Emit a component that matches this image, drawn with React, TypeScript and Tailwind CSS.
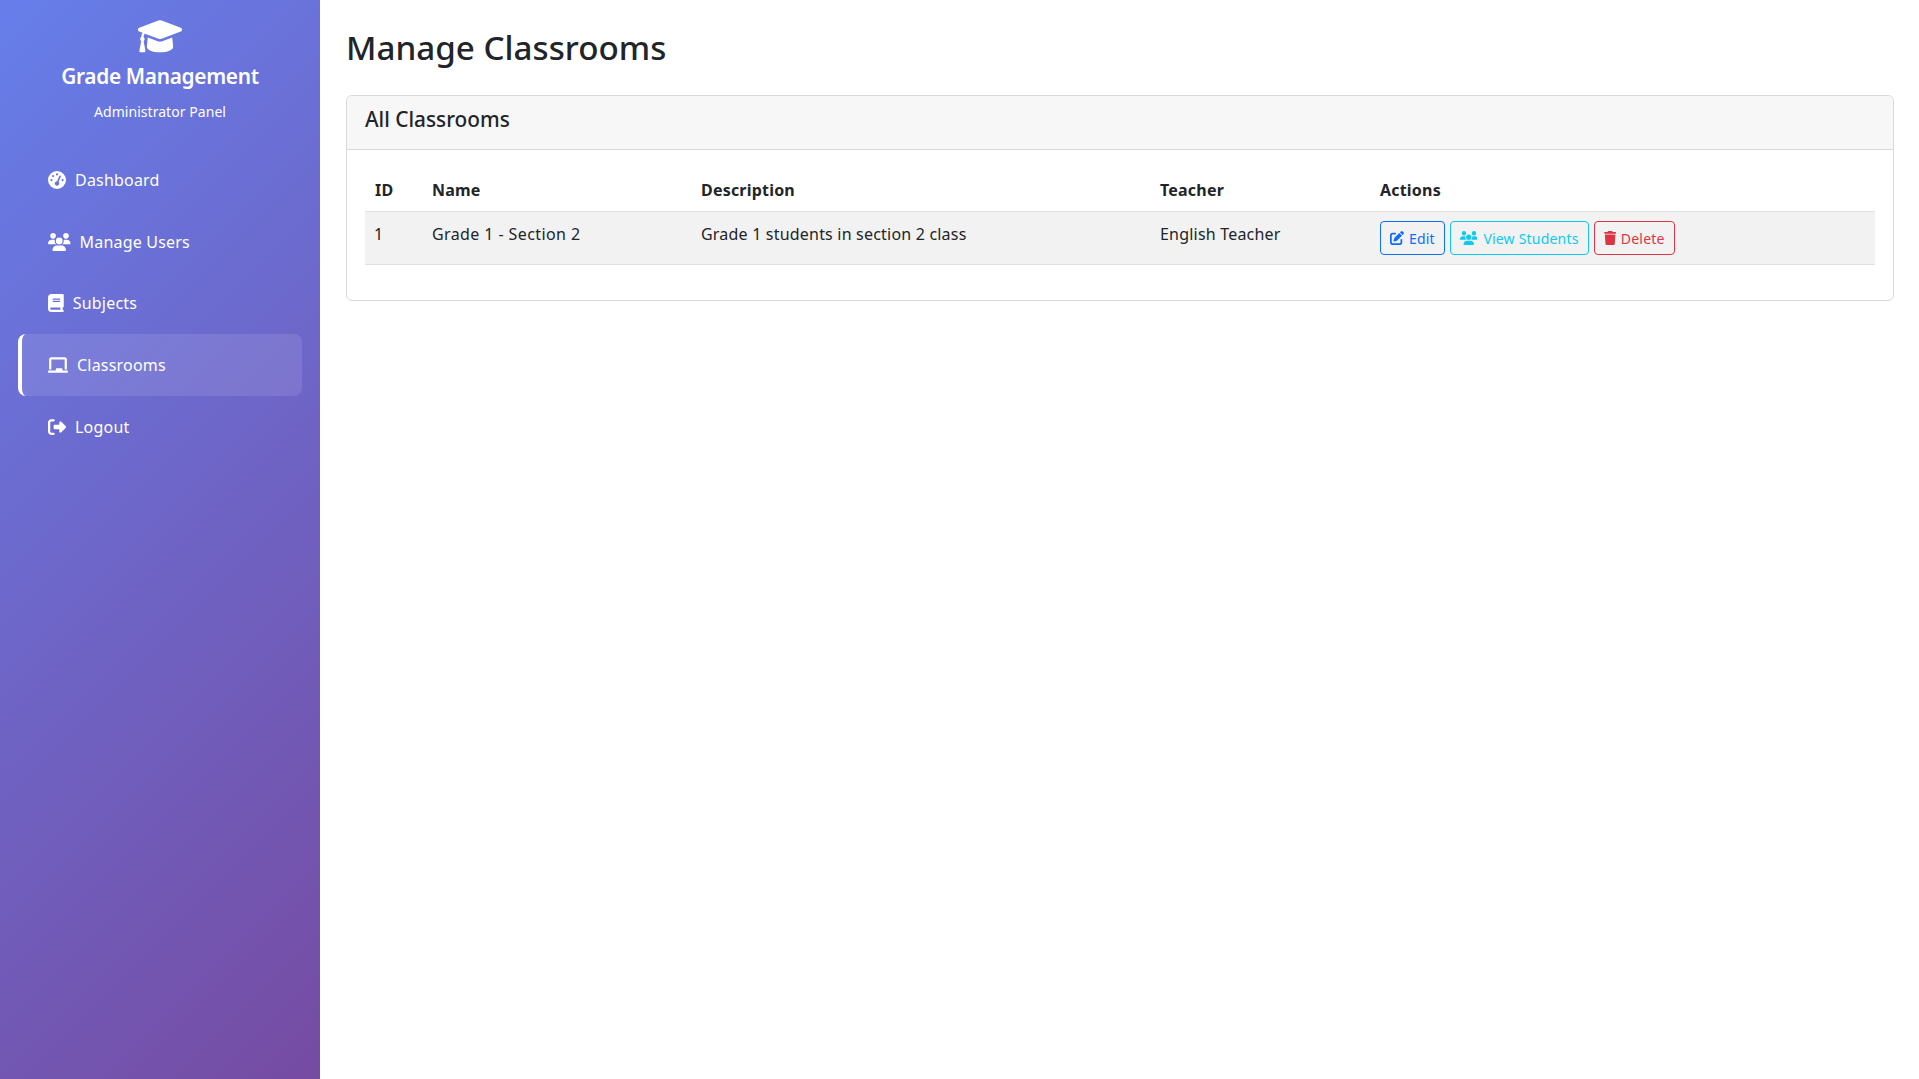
import { FaGaugeHigh, FaUsers, FaBook, FaChalkboard, FaRightFromBracket, FaPenToSquare, FaTrash } from "react-icons/fa6";
import { FaGraduationCap } from "react-icons/fa";

const nav = [
  { label: "Dashboard", Icon: FaGaugeHigh, w: "w-[18px]" },
  { label: "Manage Users", Icon: FaUsers, w: "w-[22.5px]" },
  { label: "Subjects", Icon: FaBook, w: "w-[15.75px]" },
  { label: "Classrooms", Icon: FaChalkboard, w: "w-[20px]", active: true },
  { label: "Logout", Icon: FaRightFromBracket, w: "w-[18px]" },
];

export default function App() {
  return (
    <div className="flex min-h-[1079px] bg-white text-[#212529] font-['Noto_Sans','Open_Sans',sans-serif]">
      <aside className="w-[320px] shrink-0 bg-[linear-gradient(135deg,#667eea_0%,#764ba2_100%)] text-white">
        <div className="flex flex-col items-center pt-[14.67px]">
          <FaGraduationCap className="w-[44px] h-[42.67px]" preserveAspectRatio="none" />
          <h1 className="mt-[1.66px] text-[20.8px] leading-[34px] font-semibold tracking-[-0.3px]">Grade Management</h1>
          <p className="mt-[8px] text-[14px] leading-[21px] tracking-[0.05px]">Administrator Panel</p>
        </div>
        <nav className="mt-[27px] flex flex-col px-[18px]">
          {nav.map(({ label, Icon, w, active }) => (
            <a
              key={label}
              className={
                active
                  ? "flex h-[61.8px] items-center gap-[9px] pl-[26px] rounded-lg text-[16px] tracking-[0.2px] bg-white/10 border-l-[4px] border-white"
                  : "flex h-[61.8px] items-center gap-[9px] pl-[30px] rounded-lg text-[16px] tracking-[0.2px]"
              }
            >
              <Icon className={`h-[18px] ${w}`} />
              <span>{label}</span>
            </a>
          ))}
        </nav>
      </aside>
      <main className="flex-1 pl-[26px] pr-[25px] pt-[24px]">
        <h2 className="text-[33.2px] leading-[48px] font-medium">Manage Classrooms</h2>
        <section className="mt-[23px] rounded-md border border-[#d9d9d9]">
          <div className="h-[54px] flex items-center px-[18px] pb-[5px] bg-[#f7f7f7] border-b border-[#d9d9d9] text-[20.8px] font-medium rounded-t-md">
            All Classrooms
          </div>
          <div className="px-[18px] pt-[18px] pb-[35px]">
            <div className="grid grid-cols-[58px_269px_459px_220px_1fr] text-[16px] tracking-[0.2px]">
              <div className="contents font-bold">
                <div className="pl-[10px] h-[43px] flex items-center">ID</div>
                <div className="pl-[9px] flex items-center">Name</div>
                <div className="pl-[9px] flex items-center">Description</div>
                <div className="pl-[9px] flex items-center">Teacher</div>
                <div className="pl-[9px] flex items-center">Actions</div>
              </div>
              <div className="col-span-5 grid grid-cols-subgrid bg-[#f2f2f2] border-y border-[#dee2e6] h-[54px]">
                <div className="pl-[9px] pt-[10px]">1</div>
                <div className="pl-[9px] pt-[10px] tracking-[0.4px]">Grade 1 - Section 2</div>
                <div className="pl-[9px] pt-[10px]">Grade 1 students in section 2 class</div>
                <div className="pl-[9px] pt-[10px]">English Teacher</div>
                <div className="pl-[9px] pt-[9px] flex gap-[5px] items-start text-[14px]">
                  <button className="h-[34px] px-[9px] flex items-center gap-[5px] rounded border border-[#0d6efd] text-[#0d6efd]"><FaPenToSquare className="w-[14px] h-[14px]" />Edit</button>
                  <button className="h-[34px] px-[9px] flex items-center gap-[6px] rounded border border-[#0dcaf0] text-[#0dcaf0]"><FaUsers className="w-[17.5px] h-[14px]" />View Students</button>
                  <button className="h-[34px] px-[9px] flex items-center gap-[5px] rounded border border-[#dc3545] text-[#dc3545]"><FaTrash className="w-[12.25px] h-[14px]" />Delete</button>
                </div>
              </div>
            </div>
          </div>
        </section>
      </main>
    </div>
  );
}
